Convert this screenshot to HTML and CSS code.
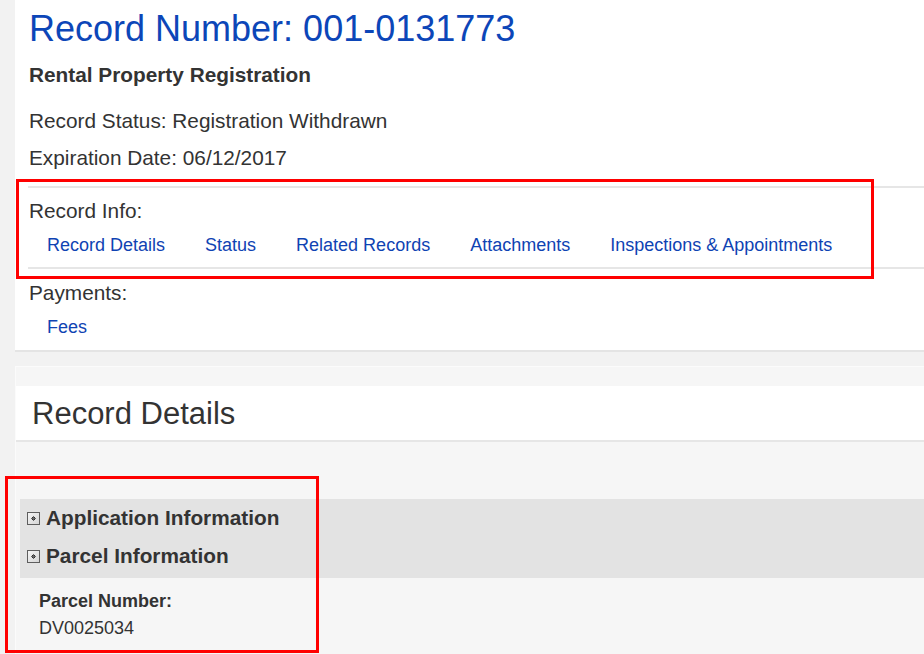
FILE: index.html
```html
<!DOCTYPE html>
<html lang="en">
<head>
<meta charset="utf-8">
<title>Record 001-0131773</title>
<link rel="stylesheet" href="styles.css">
</head>
<body>
<div class="page">
  <section class="summary">
    <h1 class="record-title"><span>Record Number:</span> <span>001-0131773</span></h1>
    <div class="record-type">Rental Property Registration</div>
    <div class="record-line status-line">Record Status: Registration Withdrawn</div>
    <div class="record-line">Expiration Date: 06/12/2017</div>

    <div class="nav-group info-group">
      <div class="nav-label">Record Info:</div>
      <nav class="nav-links">
        <a href="#">Record Details</a>
        <a href="#">Status</a>
        <a href="#">Related Records</a>
        <a href="#">Attachments</a>
        <a href="#">Inspections &amp; Appointments</a>
      </nav>
    </div>
    <div class="nav-group pay-group">
      <div class="nav-label">Payments:</div>
      <nav class="nav-links">
        <a href="#">Fees</a>
      </nav>
    </div>
  </section>

  <section class="details">
    <h2 class="details-title">Record Details</h2>
    <div class="accordion">
      <div class="acc-row">
        <svg class="acc-icon" width="13" height="13" viewBox="0 0 13 13"><defs><linearGradient id="g1" x1="0" y1="0" x2="1" y2="1"><stop offset="0" stop-color="#f6f6f6"/><stop offset="1" stop-color="#d4d4d4"/></linearGradient></defs><rect x="0.5" y="0.5" width="12" height="12" fill="url(#g1)" stroke="#5e5e5e"/><rect x="5" y="5" width="3" height="3" fill="#2e2e2e"/><rect x="4" y="6" width="5" height="1" fill="#666"/><rect x="6" y="4" width="1" height="5" fill="#666"/></svg>
        <span>Application Information</span>
      </div>
      <div class="acc-row">
        <svg class="acc-icon" width="13" height="13" viewBox="0 0 13 13"><rect x="0.5" y="0.5" width="12" height="12" fill="url(#g1)" stroke="#5e5e5e"/><rect x="5" y="5" width="3" height="3" fill="#2e2e2e"/><rect x="4" y="6" width="5" height="1" fill="#666"/><rect x="6" y="4" width="1" height="5" fill="#666"/></svg>
        <span>Parcel Information</span>
      </div>
    </div>
    <div class="parcel">
      <div class="parcel-label">Parcel Number:</div>
      <div class="parcel-value">DV0025034</div>
    </div>
  </section>

  <div class="annot annot-info"></div>
  <div class="annot annot-acc"></div>
</div>
</body>
</html>
```

FILE: styles.css
```css
html, body {
  margin: 0;
  padding: 0;
}
body {
  background: #f2f2f2;
  font-family: "Liberation Sans", Arial, sans-serif;
  color: #333;
  overflow: hidden;
}
.page {
  position: relative;
  padding-left: 15px;
  min-height: 654px;
}
.summary {
  background: #fff;
  padding: 8px 0 8px 14px;
  border-bottom: 2px solid #e4e4e4;
}
.record-title {
  margin: 0;
  font-size: 36px;
  font-weight: normal;
  line-height: 42px;
  color: #0c46b8;
  white-space: nowrap;
}
.record-type {
  margin-top: 6px;
  font-weight: bold;
  font-size: 20.8px;
  line-height: 37px;
}
.record-line {
  font-size: 20.8px;
  line-height: 37px;
}
.status-line {
  margin-top: 9px;
}
.nav-group {
  margin-left: -1px;
  padding-left: 1px;
}
.info-group {
  margin-top: 10px;
  padding-top: 8px;
  padding-bottom: 7px;
  border-top: 2px solid #e6e6e6;
  border-bottom: 2px solid #e6e6e6;
}
.pay-group {
  padding-top: 9px;
}
.nav-label {
  font-size: 20.8px;
  line-height: 30px;
}
.nav-links {
  display: flex;
  gap: 40px;
  padding-left: 18px;
  margin-top: 4px;
  font-size: 18px;
  line-height: 30px;
}
.nav-links a {
  color: #0f43b3;
  text-decoration: none;
  white-space: nowrap;
}
.details {
  margin-top: 14px;
  background: #f6f6f6;
  border-top: 1px solid #fbfbfb;
  border-left: 1px solid #fbfbfb;
  padding-top: 19px;
  min-height: 300px;
}
.details-title {
  margin: 0;
  background: #fff;
  font-size: 31px;
  font-weight: normal;
  line-height: 52px;
  padding: 2px 0 0 16px;
  border-bottom: 2px solid #e6e6e6;
  color: #333;
}
.accordion {
  margin: 57px 0 0 4px;
  background: #e3e3e3;
  padding: 0 0 3px 7px;
}
.acc-row {
  display: flex;
  align-items: center;
  gap: 6px;
  font-weight: bold;
  font-size: 20.8px;
  line-height: 38px;
  color: #333;
}
.acc-icon {
  flex: none;
  display: block;
}
.parcel {
  padding: 10px 0 0 23px;
  font-size: 18px;
  line-height: 27px;
}
.parcel-label {
  font-weight: bold;
}
.annot {
  position: absolute;
  border: 3px solid #ff0000;
  box-sizing: border-box;
  pointer-events: none;
}
.annot-info {
  left: 16px;
  top: 179px;
  width: 858px;
  height: 100px;
}
.annot-acc {
  left: 5px;
  top: 476px;
  width: 314px;
  height: 177px;
}
```
